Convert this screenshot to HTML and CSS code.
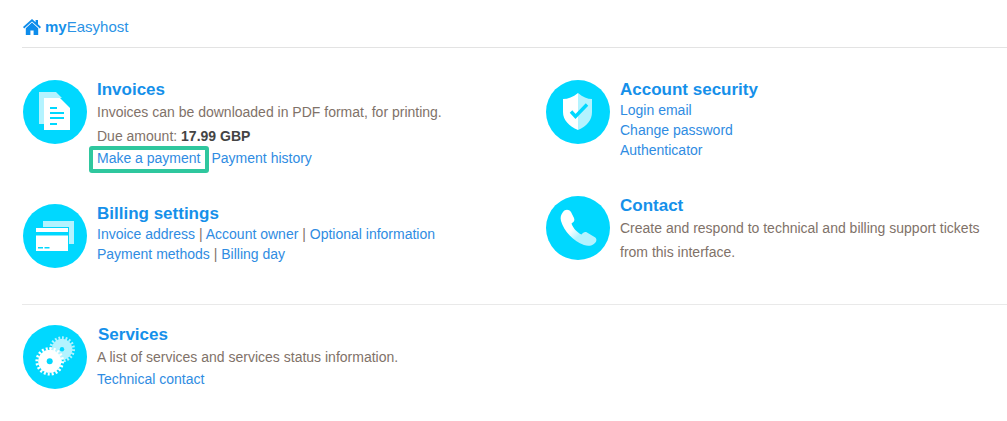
FILE: index.html
```html
<!DOCTYPE html>
<html lang="en">
<head>
  <meta charset="UTF-8" />
  <title>myEasyhost</title>
  <link rel="stylesheet" href="styles.css">
</head>
<body>
  <header class="top-bar">
    <a class="brand" href="#">
      <svg class="home-icon" viewBox="0 0 18 16"><path d="M9 0 L0 8 L1.2 9.4 L9 2.6 L16.8 9.4 L18 8 L15 5.3 V1 H12.6 V3.2 Z"/><path d="M9 3.6 L2.8 9.2 V16 H7.4 V11.5 H10.6 V16 H15.2 V9.2 Z"/></svg>
      <span><b>my</b>Easyhost</span>
    </a>
  </header>

  <main class="panels">
    <div class="column column-left">
      <section class="panel panel-invoices">
        <svg class="panel-icon" viewBox="0 0 64 64">
          <circle cx="32" cy="32" r="32" fill="#00d8ff"/>
          <path fill="#b3f3ff" d="M16 12 H33 L39 18 H21 V44 H16 Z"/>
          <path fill="#fff" d="M21 18 H37 L47 28 V50 H21 Z"/>
          <path stroke="#00d8ff" stroke-width="2" d="M27 28 H34 M27 33 H41 M27 38 H41 M27 44 H34"/>
        </svg>
        <div class="panel-body">
          <h2>Invoices</h2>
          <p class="desc">Invoices can be downloaded in PDF format, for printing.</p>
          <p class="due">Due amount: <b>17.99 GBP</b></p>
          <p class="line"><a class="marked" href="#">Make a payment</a><a class="next" href="#">Payment history</a></p>
        </div>
      </section>

      <section class="panel panel-billing">
        <svg class="panel-icon" viewBox="0 0 64 64">
          <circle cx="32" cy="32" r="32" fill="#00d8ff"/>
          <path fill="#b3f3ff" d="M20 17 H51 V40 H46 V23 H20 Z"/>
          <path fill="#fff" d="M13 24 H45 V28 H13 Z M13 31.5 H45 V47 H13 Z"/>
          <path stroke="#00d8ff" stroke-width="1.6" d="M15 43.8 H20 M21.5 43.8 H26.5"/>
        </svg>
        <div class="panel-body">
          <h2>Billing settings</h2>
          <p class="line"><a href="#">Invoice address</a> | <a href="#">Account owner</a> | <a href="#">Optional information</a></p>
          <p class="line"><a href="#">Payment methods</a> | <a href="#">Billing day</a></p>
        </div>
      </section>
    </div>

    <div class="column column-right">
      <section class="panel panel-security">
        <svg class="panel-icon" viewBox="0 0 64 64">
          <circle cx="32" cy="32" r="32" fill="#00d8ff"/>
          <path fill="#fff" d="M32 13 C27 17 22 19 17 19 V32 C17 40 23 46 32 50 Z"/>
          <path fill="#b3f3ff" d="M32 13 C37 17 41 19 46 19 V32 C46 40 41 46 32 50 Z"/>
          <path fill="none" stroke="#00d8ff" stroke-width="3.4" d="M25 31.5 L29.5 36.5 L41 24.5"/>
        </svg>
        <div class="panel-body">
          <h2>Account security</h2>
          <p class="line"><a href="#">Login email</a></p>
          <p class="line"><a href="#">Change password</a></p>
          <p class="line"><a href="#">Authenticator</a></p>
        </div>
      </section>

      <section class="panel panel-contact">
        <svg class="panel-icon" viewBox="0 0 64 64">
          <defs>
            <linearGradient id="phoneFill" x1="0" y1="0" x2="1" y2="1">
              <stop offset="0.42" stop-color="#fff"/>
              <stop offset="0.62" stop-color="#b3f3ff"/>
            </linearGradient>
          </defs>
          <circle cx="32" cy="32" r="32" fill="#00d8ff"/>
          <path fill="url(#phoneFill)" d="M17 16 C19 13 23 13 25 16 L28 22 C29 24.5 28 26 25.5 27.5 C27 32 31 36.5 35.5 38.5 C37 36.5 39 35.5 41 36.5 L48.5 41 C51 42.5 51 45 49 47 C46 50 42 50.5 38 49 C27 45 18 35 15 25 C14 21 15 18.5 17 16 Z"/>
        </svg>
        <div class="panel-body">
          <h2>Contact</h2>
          <p class="tall">Create and respond to technical and billing support tickets<br>from this interface.</p>
        </div>
      </section>
    </div>
  </main>

  <section class="panel panel-services">
    <svg class="panel-icon" viewBox="0 0 64 64">
      <circle cx="32" cy="32" r="32" fill="#00d8ff"/>
      <circle cx="39" cy="24.3" r="10.5" fill="#b3f3ff"/>
      <circle cx="39" cy="24.3" r="11.5" fill="none" stroke="#b3f3ff" stroke-width="3" pathLength="40" stroke-dasharray="1 1"/>
      <circle cx="39" cy="24.3" r="2.2" fill="#00d8ff"/>
      <circle cx="26.7" cy="36.3" r="11.5" fill="#fff"/>
      <circle cx="26.7" cy="36.3" r="12.8" fill="none" stroke="#fff" stroke-width="3" pathLength="40" stroke-dasharray="1 1"/>
      <circle cx="26.7" cy="36.3" r="3" fill="#00d8ff"/>
    </svg>
    <div class="panel-body services-body">
      <h2>Services</h2>
      <p class="desc">A list of services and services status information.</p>
      <p class="line"><a href="#">Technical contact</a></p>
    </div>
  </section>
</body>
</html>
```

FILE: styles.css
```css
body {
  margin: 0;
  font-family: "Liberation Sans", Arial, sans-serif;
  font-size: 14px;
  line-height: 20px;
  color: #7f7269;
  background: #fff;
  overflow: hidden;
}
a {
  color: #2f8ce2;
  text-decoration: none;
}
p {
  margin: 0;
}
h2 {
  margin: 0;
  font-size: 17px;
  line-height: 20px;
  font-weight: bold;
  color: #1590ea;
}
.top-bar {
  margin-left: 22px;
  height: 47px;
  border-bottom: 1px solid #e3e3e3;
}
.brand {
  display: flex;
  align-items: center;
  gap: 4px;
  padding: 17px 0 0 1px;
  color: #2a93e6;
  font-size: 15px;
}
.brand b {
  color: #1590ea;
}
.home-icon {
  width: 18px;
  height: 16px;
  fill: #0d8ceb;
}
.panels {
  display: flex;
  padding: 32px 0 0 23px;
  height: 224px;
}
.column-left {
  width: 523px;
}
.panel {
  display: flex;
  gap: 10px;
}
.panel-icon {
  width: 64px;
  height: 64px;
  flex: none;
}
.panel-invoices {
  height: 124px;
}
.panel-security {
  height: 116px;
}
.desc {
  line-height: 24px;
}
.due {
  line-height: 24px;
}
.due b {
  color: #444;
}
.marked {
  position: relative;
}
/* green highlight box around the first link */
.marked::after {
  content: "";
  position: absolute;
  left: -8px;
  right: -8px;
  top: -4px;
  bottom: -7px;
  border: 4px solid #2fc79e;
  border-radius: 3px;
}
.next {
  margin-left: 11px;
}
.tall {
  line-height: 24px;
}
.panel-services {
  border-top: 1px solid #e9e9e9;
  margin-left: 22px;
  padding: 20px 0 0 1px;
}
.services-body h2 {
  margin-left: 1px;
}
```
